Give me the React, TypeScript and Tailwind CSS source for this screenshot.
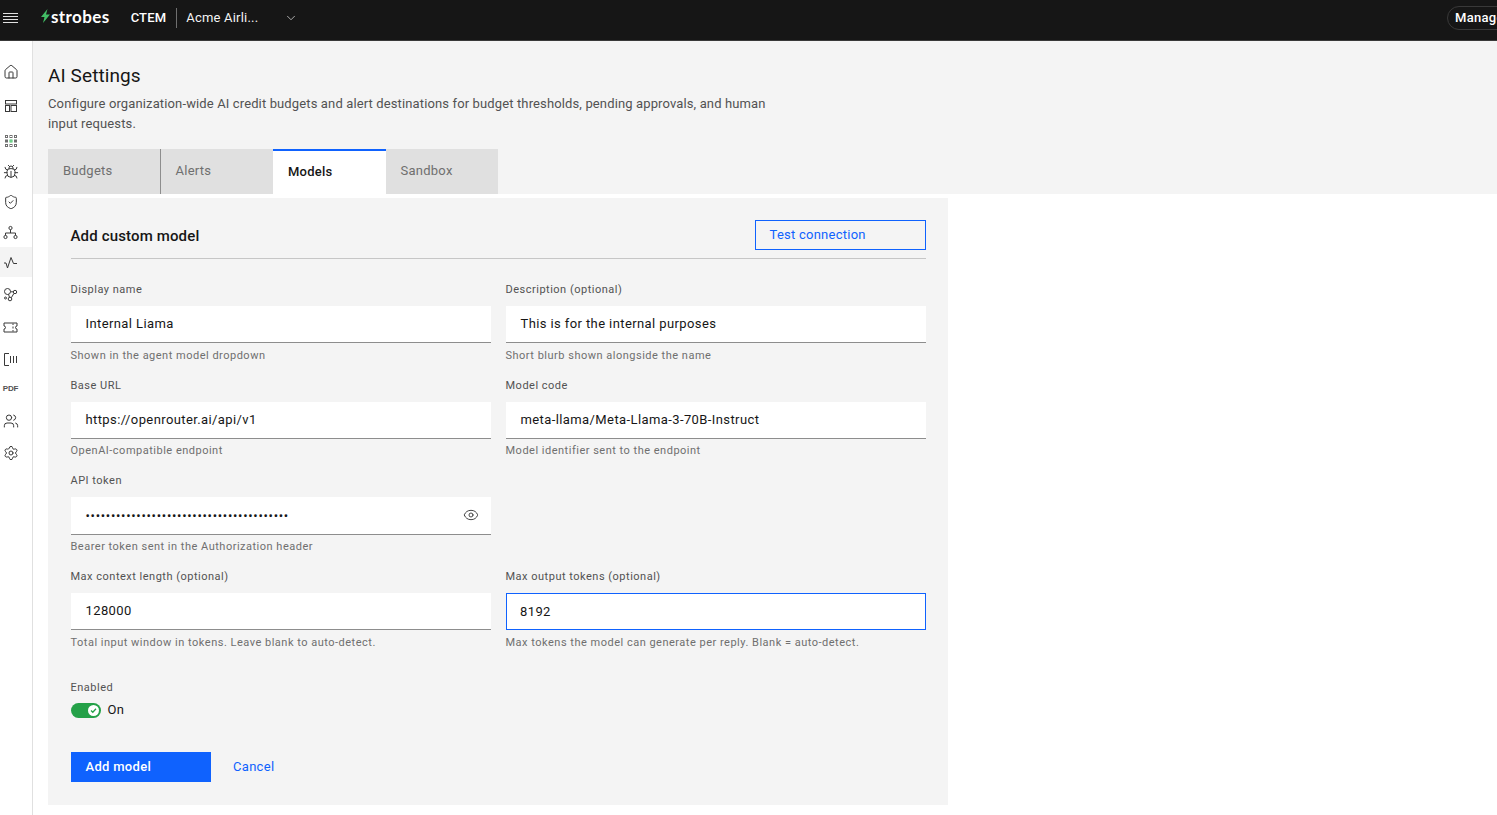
import { Bug, ChevronDown, Eye, Home, Settings, ShieldCheck, Users } from "lucide-react";

const font = "font-['Roboto',sans-serif]";

const tabs = ["Budgets", "Alerts", "Models", "Sandbox"];

function LayoutIcon() {
  return (
    <svg width="14" height="14" viewBox="0 0 14 14" fill="none" stroke="currentColor" strokeWidth="1">
      <rect x="1.5" y="1.5" width="11" height="3.5" />
      <rect x="1.5" y="6.5" width="4" height="6" />
      <rect x="7" y="6.5" width="5.5" height="6" />
    </svg>
  );
}

function AppsIcon() {
  const cells = [0, 1, 2, 3, 4, 5, 6, 7, 8];
  return (
    <svg width="14" height="14" viewBox="0 0 14 14" fill="none">
      {cells.map((c) => (
        <rect
          key={c}
          x={1.5 + (c % 3) * 4.5}
          y={1.5 + Math.floor(c / 3) * 4.5}
          width="2"
          height="2"
          stroke={c === 4 ? "#42be65" : "#6f6f6f"}
          strokeWidth="1"
        />
      ))}
    </svg>
  );
}

function HierarchyIcon() {
  return (
    <svg width="15" height="15" viewBox="0 0 15 15" fill="none" stroke="currentColor" strokeWidth="1">
      <circle cx="7.5" cy="3" r="1.6" />
      <circle cx="2.5" cy="12" r="1.6" />
      <circle cx="12.5" cy="12" r="1.6" />
      <path d="M7.5 4.6V8M2.5 10.4V8h10v2.4" />
    </svg>
  );
}

function PulseIcon() {
  return (
    <svg width="15" height="15" viewBox="0 0 15 15" fill="none" stroke="currentColor" strokeWidth="1">
      <path d="M1 8h2l1.5 5L8 2.5l2.5 6H14" />
    </svg>
  );
}

function NodesIcon() {
  return (
    <svg width="15" height="15" viewBox="0 0 15 15" fill="none" stroke="currentColor" strokeWidth="1">
      <circle cx="4.5" cy="4.5" r="3" />
      <circle cx="12" cy="5" r="1.7" />
      <circle cx="7" cy="12" r="1.8" />
      <circle cx="2.5" cy="11" r="1" />
      <path d="M7.5 4.8h2.8M5.5 7.3l1 3M8.3 10.7l2.6-4.2" />
    </svg>
  );
}

function TicketIcon() {
  return (
    <svg width="15" height="15" viewBox="0 0 15 15" fill="none" stroke="currentColor" strokeWidth="1">
      <path d="M1 3h13v3a1.5 1.5 0 0 0 0 3v3H1V9a1.5 1.5 0 0 0 0-3z" />
      <path d="M10 3.5v1.5M10 6.5v2M10 10v1.5" />
    </svg>
  );
}

function ColumnsIcon() {
  return (
    <svg width="15" height="15" viewBox="0 0 15 15" fill="none" stroke="currentColor" strokeWidth="1">
      <path d="M6 1.5H1.5v12H6" />
      <path d="M7.5 4v7M10.5 4v7M13.5 4v7" />
    </svg>
  );
}

function SideIcon({ children, active }: { children: React.ReactNode; active?: boolean }) {
  return (
    <div className={`flex h-[30px] w-full items-center justify-center pr-[11px] text-[#393939] ${active ? "bg-[#f4f4f4]" : ""}`}>
      {children}
    </div>
  );
}

function Field({
  label,
  value,
  helper,
  focused,
  icon,
}: {
  label: string;
  value: string;
  helper: string;
  focused?: boolean;
  icon?: boolean;
}) {
  return (
    <div className="h-[95.67px]">
      <div className="h-[16px] text-[11px] leading-[16px] tracking-[0.5px] text-[#525252]">{label}</div>
      <div
        className={`mt-[8px] flex h-[37.3px] items-center bg-white pr-[12px] text-[13px] text-[#161616] ${
          focused ? "border border-[#0f62fe] pl-[13.5px]" : "border-b border-[#8d8d8d] pl-[15px]"
        } ${icon ? "tracking-[0.7px]" : "tracking-[0.4px]"}`}
      >
        <span className="flex-1">{value}</span>
        {icon && <Eye size={16} strokeWidth={1.4} className="text-[#393939]" />}
      </div>
      <div className="mt-[4.5px] h-[16px] text-[11px] leading-[16px] tracking-[0.5px] text-[#6f6f6f]">{helper}</div>
    </div>
  );
}

export default function App() {
  return (
    <div className={`flex h-screen flex-col overflow-hidden bg-white ${font}`}>
      {/* Top bar */}
      <header className="flex h-[41px] shrink-0 items-center overflow-hidden border-b border-[#393939] bg-[#161616] pb-[5px] text-white">
        <svg width="15" height="12" viewBox="0 0 15 12" className="ml-[3px]" stroke="#e0e0e0" strokeWidth="1">
          <path d="M0 1.5h15M0 4.5h15M0 7.5h15M0 10.5h15" />
        </svg>
        <div className="ml-[23px] flex items-center pb-[3px]">
          <svg width="9" height="14" viewBox="0 0 9 14">
            <path d="M6.5 0 L0 8 H3.5 L2 14 L9 5.5 H5 Z" fill="#42be65" />
          </svg>
          <span className="ml-[1px] font-['Lato',sans-serif] text-[17px] font-bold leading-none tracking-[0.4px]">strobes</span>
        </div>
        <span className="ml-[21px] text-[13px] font-medium tracking-[0.16px]">CTEM</span>
        <div className="ml-[10px] h-[20px] w-px bg-[#6f6f6f]" />
        <span className="ml-[9px] w-[86px] text-[13px] tracking-[0.2px] text-[#f4f4f4]">Acme Airli...</span>
        <ChevronDown size={14} strokeWidth={1.25} className="ml-[12px] text-[#e0e0e0]" />
        <div className="flex-1" />
        <div className="mr-[-30px] flex h-[24px] w-[80px] shrink-0 items-center rounded-full border border-[#393939] pl-[7px] text-[13px] font-medium tracking-[0.3px]">
          Manage
        </div>
      </header>

      <div className="flex min-h-0 flex-1">
        {/* Sidebar */}
        <aside className="flex w-[33px] shrink-0 flex-col items-center border-r border-[#e0e0e0] pt-[16px]">
          <SideIcon><Home size={16} strokeWidth={1.5} /></SideIcon>
          <div className="h-[4px]" />
          <SideIcon><LayoutIcon /></SideIcon>
          <div className="h-[5px]" />
          <SideIcon><AppsIcon /></SideIcon>
          <div className="h-px" />
          <SideIcon><Bug size={16} strokeWidth={1.5} /></SideIcon>
          <SideIcon><ShieldCheck size={16} strokeWidth={1.5} /></SideIcon>
          <SideIcon><HierarchyIcon /></SideIcon>
          <SideIcon active><PulseIcon /></SideIcon>
          <div className="h-[2px]" />
          <SideIcon><NodesIcon /></SideIcon>
          <div className="h-[3px]" />
          <SideIcon><TicketIcon /></SideIcon>
          <div className="h-[2px]" />
          <SideIcon><ColumnsIcon /></SideIcon>
          <SideIcon><span className="font-['Liberation_Sans',sans-serif] text-[8px] font-bold tracking-[-0.2px] text-[#525252]">PDF</span></SideIcon>
          <div className="h-[2px]" />
          <SideIcon><Users size={16} strokeWidth={1.5} /></SideIcon>
          <div className="h-[2px]" />
          <SideIcon><Settings size={16} strokeWidth={1.5} /></SideIcon>
        </aside>

        {/* Main */}
        <main className="min-w-0 flex-1">
          <div className="h-[153px] bg-[#f4f4f4] pl-[15px] pt-[22px]">
            <h1 className="text-[19px] leading-[26px] tracking-[0.1px] text-[#161616]">AI Settings</h1>
            <p className="mt-[5px] w-[740px] text-[13px] leading-[20px] tracking-[0.13px] text-[#525252]">
              Configure organization-wide AI credit budgets and alert destinations for budget thresholds, pending approvals, and human input requests.
            </p>
            <div className="mt-[15px] flex h-[45px] w-[450px]">
              {tabs.map((t, i) => (
                <div
                  key={t}
                  className={`flex w-[112.5px] items-center pl-[15px] text-[13px] tracking-[0.25px] ${
                    t === "Models"
                      ? "border-t-2 border-[#0f62fe] bg-white pb-[2px] font-medium text-[#161616]"
                      : "bg-[#e0e0e0] pb-[2px] text-[#6f6f6f]"
                  } ${i === 0 ? "border-r border-[#8d8d8d]" : ""}`}
                >
                  {t}
                </div>
              ))}
            </div>
          </div>

          <section className="ml-[15px] mt-[4px] h-[607px] w-[900px] bg-[#f4f4f4] px-[22.5px] pt-[22px]">
            <div className="flex h-[39px] items-start justify-between border-b border-[#c6c6c6]">
              <h2 className="mt-[6px] text-[15px] font-medium leading-[20px] tracking-[0.15px] text-[#161616]">Add custom model</h2>
              <button className="flex h-[30px] w-[171px] items-center border border-[#0f62fe] pl-[14px] text-[13px] tracking-[0.25px] text-[#0f62fe]">
                Test connection
              </button>
            </div>

            <div className="mt-[23px] grid grid-cols-2 gap-x-[15px]">
              <Field label="Display name" value="Internal Liama" helper="Shown in the agent model dropdown" />
              <Field label="Description (optional)" value="This is for the internal purposes" helper="Short blurb shown alongside the name" />
              <Field label="Base URL" value="https://openrouter.ai/api/v1" helper="OpenAI-compatible endpoint" />
              <Field label="Model code" value="meta-llama/Meta-Llama-3-70B-Instruct" helper="Model identifier sent to the endpoint" />
              <Field label="API token" value="••••••••••••••••••••••••••••••••••••••••" helper="Bearer token sent in the Authorization header" icon />
              <div />
              <Field label="Max context length (optional)" value="128000" helper="Total input window in tokens. Leave blank to auto-detect." />
              <Field label="Max output tokens (optional)" value="8192" helper="Max tokens the model can generate per reply. Blank = auto-detect." focused />
            </div>

            <div className="mt-[15px] text-[11px] leading-[16px] tracking-[0.5px] text-[#525252]">Enabled</div>
            <div className="mt-[6px] flex items-center">
              <div className="flex h-[15px] w-[30px] items-center justify-end rounded-full bg-[#24a148] pr-[2px]">
                <div className="flex h-[11px] w-[11px] items-center justify-center rounded-full bg-white">
                  <svg width="7" height="7" viewBox="0 0 7 7" fill="none" stroke="#24a148" strokeWidth="1.3">
                    <path d="M1 3.5l1.8 1.8L6 1.8" />
                  </svg>
                </div>
              </div>
              <span className="ml-[7px] pb-[2px] text-[13px] leading-[15px] tracking-[0.3px] text-[#161616]">On</span>
            </div>

            <div className="mt-[33px] flex items-center">
              <button className="flex h-[30px] w-[140px] items-center bg-[#0f62fe] pl-[15px] text-[13px] font-medium tracking-[0.3px] text-white">
                Add model
              </button>
              <a className="ml-[22.5px] text-[13px] tracking-[0.3px] text-[#0f62fe]">Cancel</a>
            </div>
          </section>
        </main>
      </div>
    </div>
  );
}
